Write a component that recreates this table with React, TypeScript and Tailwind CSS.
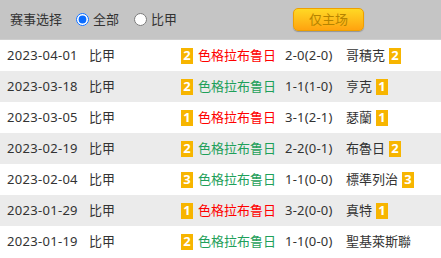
import React from 'react';

type Match = {
  date: string;
  league: string;
  homeRank: string;
  home: string;
  score: string;
  away: string;
  awayRank?: string;
  win: boolean;
};

const matches: Match[] = [
  { date: '2023-04-01', league: '比甲', homeRank: '2', home: '色格拉布鲁日', score: '2-0(2-0)', away: '哥積克', awayRank: '2', win: true },
  { date: '2023-03-18', league: '比甲', homeRank: '2', home: '色格拉布鲁日', score: '1-1(1-0)', away: '亨克', awayRank: '1', win: false },
  { date: '2023-03-05', league: '比甲', homeRank: '1', home: '色格拉布鲁日', score: '3-1(2-1)', away: '瑟蘭', awayRank: '1', win: true },
  { date: '2023-02-19', league: '比甲', homeRank: '2', home: '色格拉布鲁日', score: '2-2(0-1)', away: '布魯日', awayRank: '2', win: false },
  { date: '2023-02-04', league: '比甲', homeRank: '3', home: '色格拉布鲁日', score: '1-1(0-0)', away: '標準列治', awayRank: '3', win: false },
  { date: '2023-01-29', league: '比甲', homeRank: '1', home: '色格拉布鲁日', score: '3-2(0-0)', away: '真特', awayRank: '1', win: true },
  { date: '2023-01-19', league: '比甲', homeRank: '2', home: '色格拉布鲁日', score: '1-1(0-0)', away: '聖基萊斯聯', win: false },
];

function Rank({ n }: { n: string }) {
  return (
    <span className="inline-flex h-[16px] w-[12px] shrink-0 items-center justify-center bg-[#f7b500] text-[13px] font-bold leading-none text-white">
      {n}
    </span>
  );
}

export default function App() {
  return (
    <div
      className="w-[441px] h-[258px] overflow-hidden bg-white text-[13px] text-[#333]"
      style={{ fontFamily: '"Noto Sans", "Noto Sans CJK SC", sans-serif' }}
    >
      {/* filter bar */}
      <div className="flex h-10 items-center border-b border-[#cfcfcf] bg-[#c5c5c5] pl-[10px]">
        <span>赛事选择</span>
        <label className="ml-[14px] flex items-center">
          <input type="radio" name="lg" defaultChecked className="m-0 h-[13px] w-[13px] accent-[#0a6cff]" />
          <span className="ml-[4px]">全部</span>
        </label>
        <label className="ml-[15px] flex items-center">
          <input type="radio" name="lg" className="m-0 h-[13px] w-[13px]" />
          <span className="ml-[4px]">比甲</span>
        </label>
        <button className="ml-[116px] h-[23px] w-[71px] rounded-[5px] border border-[#eea000] bg-gradient-to-b from-[#ffd824] to-[#ffa30f] text-[13px] text-[#b58400] shadow-[0_1px_1px_rgba(0,0,0,0.25)]">
          仅主场
        </button>
      </div>

      {/* matches */}
      {matches.map((m, i) => (
        <div
          key={m.date}
          className={`flex h-[31px] items-center ${i % 2 === 1 ? 'bg-[#ebebeb]' : 'bg-white'}`}
        >
          <span className="w-[89px] shrink-0 pl-[7px] tracking-[0.3px]">{m.date}</span>
          <span className="w-[92px] shrink-0">{m.league}</span>
          <span className="flex w-[104px] shrink-0 items-center gap-[5px]">
            <Rank n={m.homeRank} />
            <span className={m.win ? 'text-[#ff0000]' : 'text-[#1ea05a]'}>{m.home}</span>
          </span>
          <span className="w-[61px] shrink-0 tracking-[0.2px]">{m.score}</span>
          <span className="flex items-center gap-[4px]">
            <span>{m.away}</span>
            {m.awayRank && <Rank n={m.awayRank} />}
          </span>
        </div>
      ))}
    </div>
  );
}
